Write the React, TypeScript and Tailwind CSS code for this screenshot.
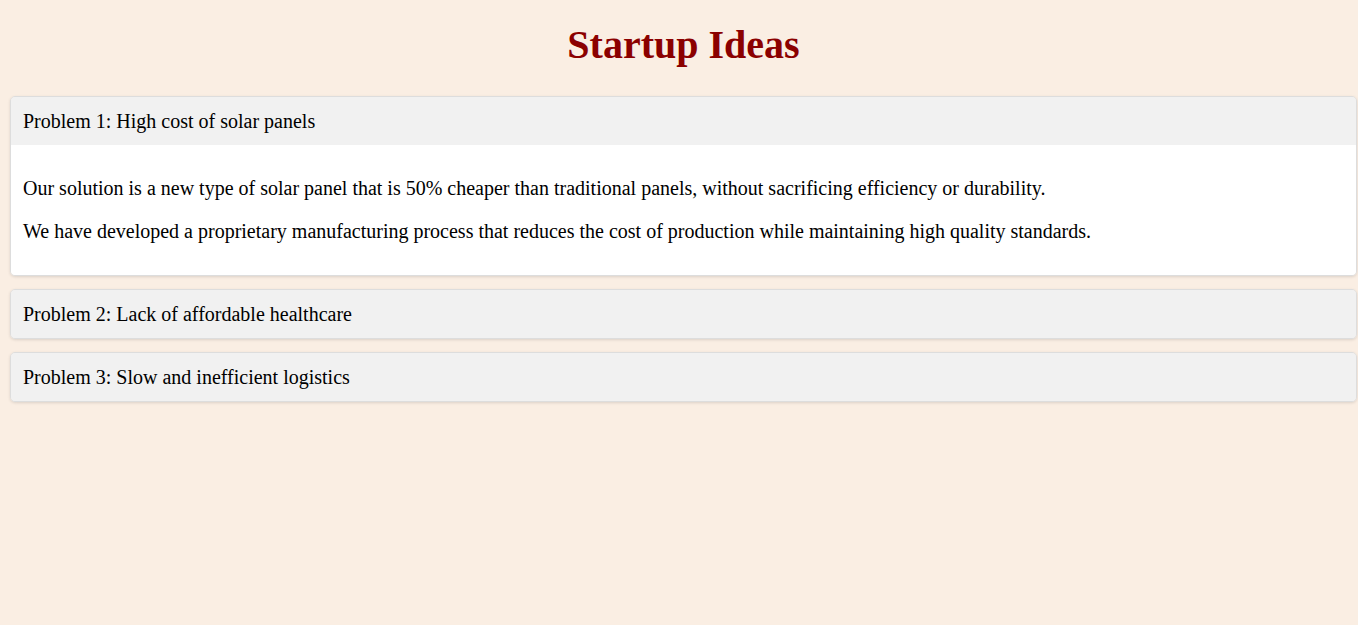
import React from "react";

const serif = { fontFamily: '"Liberation Serif", "Times New Roman", serif' };

function Card({ title, children }: { title: string; children?: React.ReactNode }) {
  return (
    <div className="mb-[13px] border border-[#dddddd] rounded-[5px] shadow-[0_1px_3px_rgba(0,0,0,0.12)] overflow-hidden">
      <div className="bg-[#f1f1f1] px-[12px] pt-[12px] pb-[12px] text-[20px] leading-[24px] text-black">{title}</div>
      {children && <div className="bg-white px-[12px] pt-[12px] pb-[12px] text-[20px] leading-[23px] text-black">{children}</div>}
    </div>
  );
}

export default function App() {
  return (
    <div className="min-h-[625px] bg-[#faeee3]" style={serif}>
      <div className="ml-[10px] mr-[1px]">
        <h1 className="text-center text-[40px] leading-[46px] font-bold text-[#8b0000] pt-[22px] pb-[28px]">Startup Ideas</h1>
        <Card title="Problem 1: High cost of solar panels">
          <p className="my-[20px]">
            Our solution is a new type of solar panel that is 50% cheaper than traditional panels, without sacrificing efficiency or durability.
          </p>
          <p className="my-[20px]">
            We have developed a proprietary manufacturing process that reduces the cost of production while maintaining high quality standards.
          </p>
        </Card>
        <Card title="Problem 2: Lack of affordable healthcare" />
        <Card title="Problem 3: Slow and inefficient logistics" />
      </div>
    </div>
  );
}
